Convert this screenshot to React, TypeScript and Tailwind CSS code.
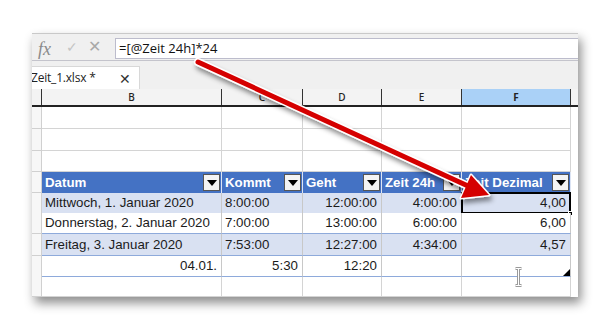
import React from "react";

const COLS = "grid grid-cols-[10px_180px_81px_79px_80px_109px_7px]";
const cellFont = "font-['Liberation_Sans',Arial,sans-serif] text-[13.3px] text-[#1b1b1b]";

function Dropdown() {
  return (
    <span className="ml-auto mr-[1px] flex h-[17px] w-[17px] shrink-0 items-center justify-center border border-[#555] bg-[#f4f4f4]">
      <svg width="10" height="6" viewBox="0 0 10 6">
        <path d="M0 0 L10 0 L5 6 Z" fill="#000" />
      </svg>
    </span>
  );
}

function EmptyRow({ h }: { h: string }) {
  return (
    <div className={`${COLS} ${h}`}>
      <div className="border-b border-r border-[#d0d0d0] bg-[#f7f7f7]" />
      <div className="border-b border-r border-[#d4d4d4] bg-white" />
      <div className="border-b border-r border-[#d4d4d4] bg-white" />
      <div className="border-b border-r border-[#d4d4d4] bg-white" />
      <div className="border-b border-r border-[#d4d4d4] bg-white" />
      <div className="border-b border-r border-[#d4d4d4] bg-white" />
      <div className="bg-white" />
    </div>
  );
}

type Row = { cells: string[]; shaded: boolean; selected?: boolean };

const data: Row[] = [
  { cells: ["Mittwoch, 1. Januar 2020", "8:00:00", "12:00:00", "4:00:00", "4,00"], shaded: true, selected: true },
  { cells: ["Donnerstag, 2. Januar 2020", "7:00:00", "13:00:00", "6:00:00", "6,00"], shaded: false },
  { cells: ["Freitag, 3. Januar 2020", "7:53:00", "12:27:00", "4:34:00", "4,57"], shaded: true },
];

const heights = ["h-[20px]", "h-[21px]", "h-[22px]"];

export default function App() {
  return (
    <div className="relative h-[330px] w-[610px] overflow-hidden bg-white">
      <div className="pl-[32px] pt-[33px]">
        <div className="flex h-[264px] w-[546px] flex-col overflow-hidden bg-[#f0f0f0] shadow-[3px_6px_10px_rgba(0,0,0,0.45)]">
          {/* formula bar */}
          <div className="flex h-[27px] shrink-0 items-start border-t border-[#c9c9c9]">
            <span className="ml-[6px] mt-[2px] w-[20px] font-['Liberation_Serif',serif] text-[18px] italic text-[#8a8a8a]">
              fx
            </span>
            <span className="ml-[8px] mt-[5px] text-[14px] leading-[16px] text-[#c4c4c4]">✓</span>
            <span className="ml-[10px] mt-[4px] text-[16px] leading-[16px] text-[#a8a8a8]">✕</span>
            <div className="ml-[14px] mt-[4px] flex h-[21px] flex-1 items-center border border-r-0 border-[#bcbccc] bg-white pl-[3px] font-['Open_Sans',sans-serif] text-[13px] text-[#111]">
              =[@Zeit 24h]*24
            </div>
          </div>

          {/* tab bar */}
          <div className="flex h-[29px] shrink-0 items-end border-t border-[#c4c4cc]">
            <div className="flex h-[23px] w-[108px] items-center border-r border-t border-[#d8d8d8] bg-white font-['Open_Sans',sans-serif] text-[12px] tracking-[-0.2px] text-[#222]">
              <span className="-ml-[1px]">Zeit_1.xlsx *</span>
              <span className="ml-auto mr-[8px] text-[14px] text-[#333]">✕</span>
            </div>
          </div>

          {/* column headers */}
          <div className={`${COLS} h-[18px] shrink-0 border-b-2 border-[#222] font-['Noto_Sans',sans-serif] text-[10px] font-medium text-[#222]`}>
            <div className="border-r border-[#333] bg-[#f3f3f3]" />
            <div className="flex items-center justify-center border-r border-[#333] bg-[#f3f3f3]">B</div>
            <div className="flex items-center justify-center border-r border-[#333] bg-[#f3f3f3]">C</div>
            <div className="flex items-center justify-center border-r border-[#333] bg-[#f3f3f3]">D</div>
            <div className="flex items-center justify-center border-r border-[#333] bg-[#f3f3f3]">E</div>
            <div className="flex items-center justify-center border-r border-[#333] bg-[#aad1f7] font-bold">F</div>
            <div className="bg-[#f3f3f3]" />
          </div>

          {/* sheet rows */}
          <div className="flex flex-col bg-white">
            <EmptyRow h="h-[22px]" />
            <EmptyRow h="h-[22px]" />
            <EmptyRow h="h-[21px]" />

            {/* table header */}
            <div className={`${COLS} h-[21px] ${cellFont}`}>
              <div className="border-b border-r border-[#d0d0d0] bg-[#f7f7f7]" />
              {["Datum", "Kommt", "Geht", "Zeit 24h", "Zeit Dezimal"].map((t) => (
                <div
                  key={t}
                  className="flex items-center border-r border-[#dce4f4] bg-[#4472c4] pl-[3px] font-bold text-white"
                >
                  <span>{t}</span>
                  <Dropdown />
                </div>
              ))}
              <div className="bg-white" />
            </div>

            {/* data rows */}
            {data.map((r, i) => (
              <div key={i} className={`${COLS} ${heights[i]} ${cellFont}`}>
                <div className="border-b border-r border-[#d0d0d0] bg-[#f7f7f7]" />
                {r.cells.map((c, j) => (
                  <div
                    key={j}
                    className={`relative flex items-center border-b border-r border-b-[#8eaadb] border-r-[#c8c8c8] px-[3px] ${
                      r.shaded ? "bg-[#d9e1f2]" : "bg-white"
                    } ${j < 2 ? "justify-start" : "justify-end pr-[4px]"}`}
                  >
                    {c}
                    {r.selected && j === 4 && (
                      <>
                        <span className="absolute -left-[1px] -top-[1px] -right-[1px] -bottom-[1px] border-2 border-black" />
                        <span className="absolute -bottom-[3px] -right-[3px] h-[5px] w-[5px] border border-white bg-black" />
                      </>
                    )}
                  </div>
                ))}
                <div className="bg-white" />
              </div>
            ))}

            {/* total row */}
            <div className={`${COLS} h-[20px] ${cellFont}`}>
              <div className="border-b border-r border-[#d0d0d0] bg-[#f7f7f7]" />
              {["04.01.", "5:30", "12:20", "", ""].map((c, j) => (
                <div
                  key={j}
                  className="relative flex items-center justify-end border-b border-r border-b-[#8eaadb] border-r-[#c8c8c8] bg-white pr-[4px]"
                >
                  {c}
                  {j === 4 && (
                    <svg className="absolute bottom-0 right-0" width="7" height="7" viewBox="0 0 7 7">
                      <path d="M7 0 L7 7 L0 7 Z" fill="#000" />
                    </svg>
                  )}
                </div>
              ))}
              <div className="bg-white" />
            </div>

            <EmptyRow h="h-[21px]" />
          </div>
        </div>
      </div>

      {/* red arrow over the sheet */}
      <svg className="pointer-events-none absolute left-0 top-0" width="610" height="330" viewBox="0 0 610 330">
        <defs>
          <filter id="sh" x="-10%" y="-10%" width="130%" height="140%">
            <feDropShadow dx="2" dy="4" stdDeviation="2.5" floodColor="#000" floodOpacity="0.45" />
          </filter>
        </defs>
        <g filter="url(#sh)">
          <line x1="198" y1="62" x2="468" y2="186" stroke="#fff" strokeWidth="8" strokeLinecap="round" />
          <path d="M489 195 L461 198 L471 175 Z" fill="#fff" stroke="#fff" strokeWidth="3" strokeLinejoin="round" />
          <line x1="198" y1="62" x2="468" y2="186" stroke="#d50000" strokeWidth="5" strokeLinecap="round" />
          <path d="M489 195 L461 198 L471 175 Z" fill="#d50000" />
        </g>
      </svg>

      {/* text cursor */}
      <svg className="pointer-events-none absolute left-[514px] top-[267px]" width="9" height="20" viewBox="0 0 9 20">
        <path d="M1.5 1.5 H7.5 M4.5 1.5 V18.5 M1.5 18.5 H7.5" stroke="#9a9a9a" strokeWidth="3" fill="none" />
        <path d="M1.5 1.5 H7.5 M4.5 1.5 V18.5 M1.5 18.5 H7.5" stroke="#fff" strokeWidth="1" fill="none" />
      </svg>
    </div>
  );
}
